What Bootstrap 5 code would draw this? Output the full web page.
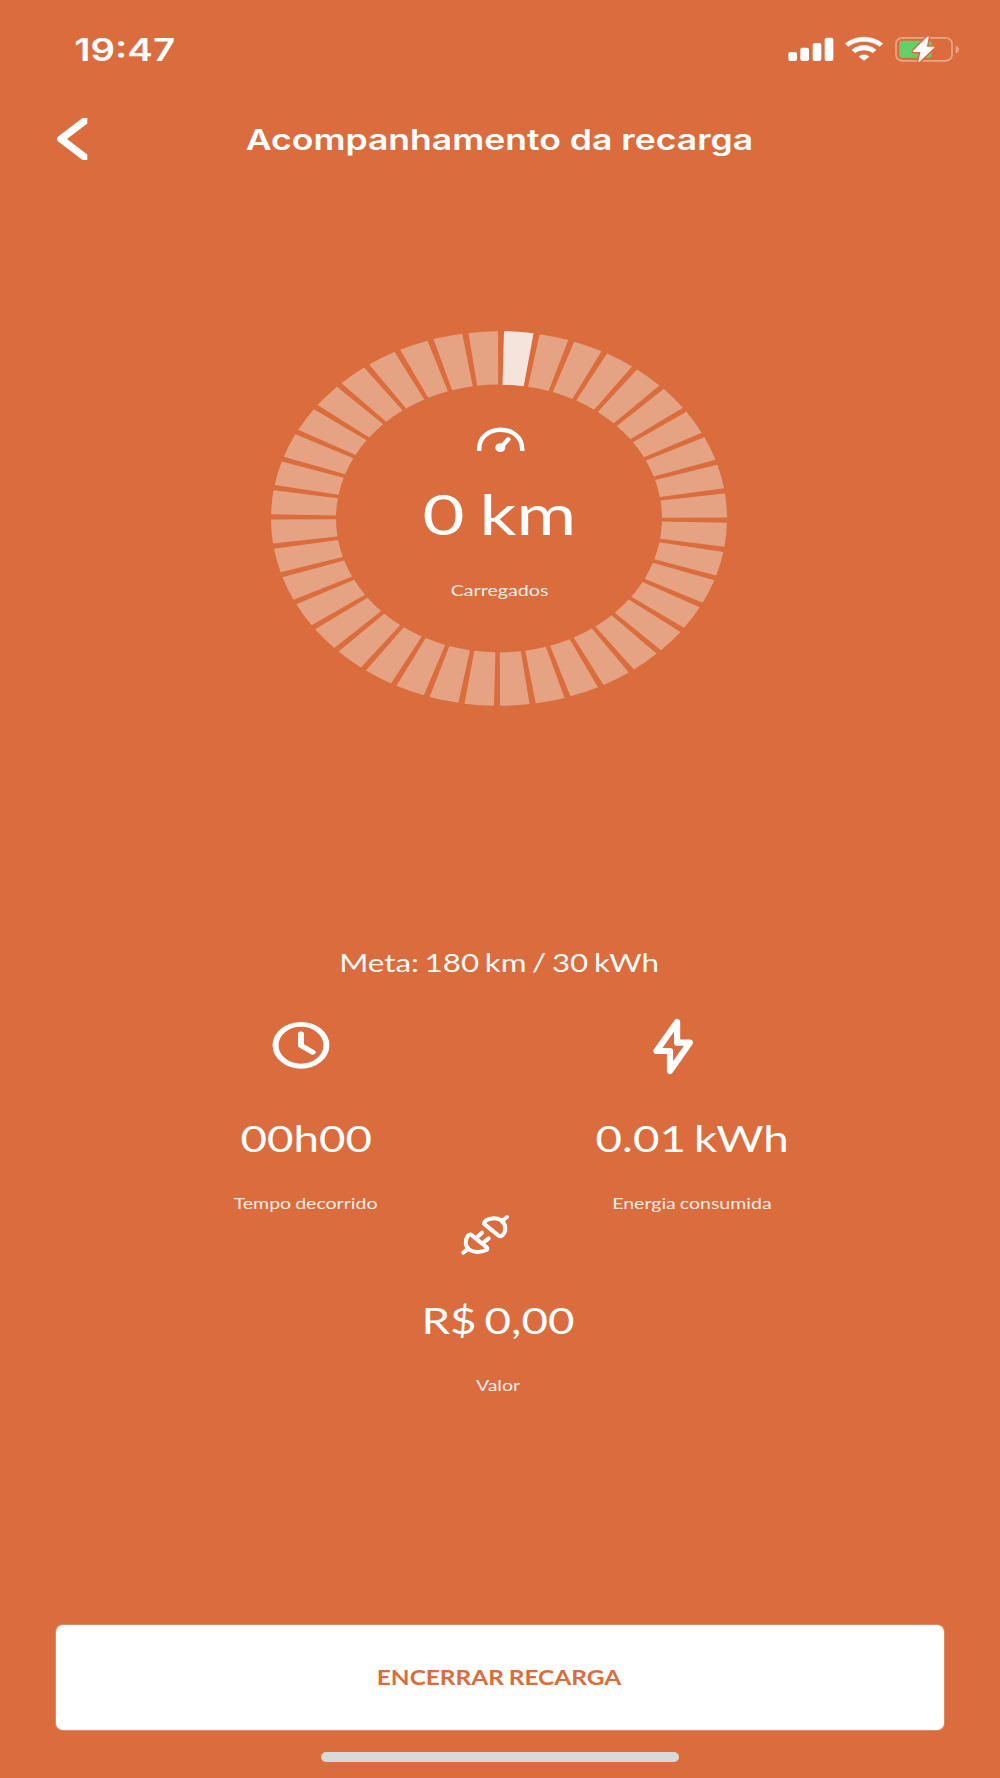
<!DOCTYPE html>
<html lang="pt-BR">
<head>
<meta charset="utf-8">
<meta name="viewport" content="width=device-width, initial-scale=1">
<title>Acompanhamento da recarga</title>
<link href="https://cdn.jsdelivr.net/npm/bootstrap@5.3.0/dist/css/bootstrap.min.css" rel="stylesheet">
<style>
  :root { --brand: #da6c3d; --soft: #e5a383; --lit: #f4e4dc; }
  body { background: var(--brand); color: #fff; font-family: Lato, "Open Sans", sans-serif; }
  svg { display: block; flex: none; }
  .screen { height: 1778px; overflow: hidden; }
  .status-bar { height: 100px; padding: 0 30px 0 84px; }
  .status-bar svg { margin-bottom: 2px; }
  .app-header { height: 80px; padding: 0 58px 0 56px; margin-bottom: 151px; }
  .app-header svg { margin-bottom: 2px; }
  .app-header .spacer { width: 32px; }
  .ui-font { font-family: Inter, "Liberation Sans", sans-serif; font-weight: 600; }
  .wide { display: inline-block; white-space: nowrap; word-spacing: -.05em; transform: scaleX(var(--sx, 1.22)); }
  .ui-font.wide { word-spacing: 0; }
  .clock-text { font-size: 31px; line-height: 40px; --sx: 1.24; }
  .title-text { font-size: 28.5px; line-height: 40px; --sx: 1.247; }
  .content { padding-right: 2px; }
  .dial { display: grid; justify-items: center; height: 375px; }
  .dial > * { grid-area: 1 / 1; }
  .dial-info { padding-top: 89px; }
  .dial-info svg { margin-left: 4px; }
  .km-text { font-size: 57px; line-height: 72px; margin: 17px 0 0 1px; --sx: 1.272; }
  .caption { font-size: 15.9px; line-height: 20px; margin-top: 30px; opacity: .88; --sx: 1.228; }
  .dial .caption { margin: 31px 0 0 1px; --sx: 1.236; }
  .goal { font-size: 25.7px; line-height: 40px; margin-top: 236px; word-spacing: -.075em; --sx: 1.22; opacity: .97; }
  .metrics { width: 772px; margin-top: 34px; }
  .metric-value { font-size: 37px; line-height: 50px; margin-top: 37px; word-spacing: -.08em; --sx: 1.235; }
  .metric-value + .caption { margin-top: 30px; }
  .icon-clock { margin-right: 11px; }
  .icon-bolt { margin-right: 38.5px; }
  .icon-plug { margin-right: 27px; }
  .price { padding-right: 1.5px; }
  .price .metric-value { margin-top: 38px; --sx: 1.235; }
  .btn-stop { height: 105px; margin: 0 56px 22px 55.5px; background: #fff; color: var(--brand);
    border-radius: 7px; font-size: 20.6px; font-weight: 700; box-shadow: 0 0 0 1px #e08a64; }
  .btn-stop:hover { background: #fff; color: var(--brand); }
  .btn-stop .wide { --sx: 1.187; margin-right: 1.5px; }
  .home-bar { width: 358px; height: 10px; background: #d9d9d9; margin-bottom: 16px; }
</style>
</head>
<body>
<div class="screen d-flex flex-column">
  <div class="status-bar d-flex justify-content-between align-items-center">
    <span class="wide ui-font clock-text">19:47</span>
    <svg width="190" height="38" viewBox="0 0 570 114">
      <g fill="#fff">
        <rect x="25" y="66" width="26" height="27" rx="6"/>
        <rect x="61" y="53" width="26" height="40" rx="6"/>
        <rect x="98" y="39" width="26" height="54" rx="6"/>
        <rect x="134" y="23" width="26" height="70" rx="6"/>
        <g stroke="#fff" stroke-width="2" stroke-linejoin="round">
          <path d="M196 41C228 15.500 276 15.500 308 41L299 49C272 29 232 29 205 49Z"/>
          <path d="M216 60C236 42 268 42 288 60L278 68C264 57 240 57 226 68Z"/>
          <path d="M237 80C246 73 258 73 267 80L252 91Z"/>
        </g>
      </g>
      <rect x="348" y="23.500" width="168" height="69" rx="20" ry="17" fill="none" stroke="#e8a687" stroke-width="5"/>
      <path d="M527 47Q537 50 537 58.500T527 70Z" fill="#e8a687"/>
      <rect x="358" y="32" width="97" height="51" rx="9" fill="#67cf69"/>
      <path d="M444 21L401 64H424L417 94L461 52H438Z" fill="#fff" stroke="#da6c3d" stroke-width="13" stroke-linejoin="round"/>
      <path d="M444 21L401 64H424L417 94L461 52H438Z" fill="#fff" stroke="#fff" stroke-width="4" stroke-linejoin="round"/>
    </svg>
  </div>

  <header class="app-header d-flex align-items-center">
    <svg width="32" height="44" viewBox="0 0 32 44" role="img" aria-label="Voltar">
      <path d="M26.500 1H31.300V6.500L11 22L31.300 37.500V43H26.500L1.600 24Q0 22 1.600 20Z" fill="#fff"/>
    </svg>
    <div class="flex-grow-1 text-center"><span class="wide ui-font title-text">Acompanhamento da recarga</span></div>
    <div class="spacer"></div>
  </header>

  <main class="content d-flex flex-column align-items-center">
    <section class="dial">
      <svg width="458" height="375" viewBox="-229 -187.500 458 375">
        <g transform="scale(1 .8215) rotate(-89.500)" fill="none" stroke-width="65">
          <circle r="195.500" stroke="#e5a383" pathLength="360" stroke-dasharray="7.440 1.560" stroke-dashoffset="-.78"/>
          <circle r="195.500" stroke="#f4e4dc" pathLength="360" stroke-dasharray="7.440 352.560" stroke-dashoffset="-.78"/>
        </g>
      </svg>
      <div class="dial-info d-flex flex-column align-items-center">
        <svg width="62" height="40" viewBox="0 0 186 120">
          <g fill="none" stroke="#fff">
            <path d="M27.500 93V86C27.500 54 55 29 92 29S156.500 54 156.500 86V93" stroke-width="13.500"/>
            <path d="M93 82L115 58" stroke-width="13" stroke-linecap="round"/>
          </g>
          <ellipse cx="91" cy="83" rx="15" ry="13" fill="#fff"/>
        </svg>
        <div class="wide km-text">0 km</div>
        <div class="wide caption">Carregados</div>
      </div>
    </section>

    <div class="wide goal">Meta: 180 km / 30 kWh</div>

    <section class="metrics row g-0">
      <div class="col-6 d-flex flex-column align-items-center">
        <svg class="icon-clock" width="60" height="60" viewBox="-30 -30 60 60">
          <g transform="translate(0 -.7) scale(1.217 1)" fill="none" stroke="#fff" stroke-width="4.900" stroke-linecap="round" stroke-linejoin="round">
            <circle r="20.900"/>
            <path d="M0 -11.300V.2L9.600 6.900"/>
          </g>
        </svg>
        <div class="wide metric-value">00h00</div>
        <div class="wide caption">Tempo decorrido</div>
      </div>
      <div class="col-6 d-flex flex-column align-items-center">
        <svg class="icon-bolt" width="60" height="60" viewBox="642.500 1016 60 60">
          <path d="M676.600 1022V1042.700H689.300L669.500 1071V1051H656Z" fill="none" stroke="#fff" stroke-width="6.200" stroke-linejoin="round"/>
        </svg>
        <div class="wide metric-value">0.01 kWh</div>
        <div class="wide caption">Energia consumida</div>
      </div>
    </section>

    <section class="price d-flex flex-column align-items-center">
      <svg class="icon-plug" width="64" height="44" viewBox="0 15 192 132">
        <g fill="none" stroke="#fff" stroke-width="12" stroke-linecap="round" stroke-linejoin="round">
          <path d="M31 134L46 122M162 27L147 39M72 88L87 74M91 104L107 91"/>
          <path d="M57 82L102 119Q105 123 100 126C84 134 62 134 47 124C35 112 36 94 46 82Q51 77 57 82Z"/>
          <path d="M93 45C98 33 124 25 145 37C161 50 160 72 147 83Q141 87 136 82L95 49Q92 47 93 45Z"/>
        </g>
      </svg>
      <div class="wide metric-value">R$ 0,00</div>
      <div class="wide caption">Valor</div>
    </section>
  </main>

  <button type="button" class="btn btn-stop mt-auto border-0 p-0"><span class="wide">ENCERRAR RECARGA</span></button>
  <div class="home-bar rounded-pill mx-auto flex-shrink-0"></div>
</div>
<script src="https://cdn.jsdelivr.net/npm/bootstrap@5.3.0/dist/js/bootstrap.bundle.min.js"></script>
</body>
</html>
